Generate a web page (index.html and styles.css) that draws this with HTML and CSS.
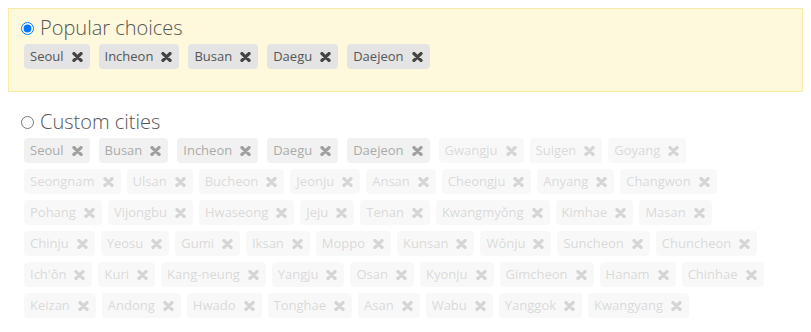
FILE: index.html
```html
<!DOCTYPE html>
<html>
<head>
<meta charset="utf-8">
<link rel="stylesheet" href="styles.css">
</head>
<body>
<svg width="0" height="0" class="defs">
  <symbol id="x" viewBox="0 0 11 10">
    <path d="M2 1.6 L9 8.4 M9 1.6 L2 8.4" stroke="currentColor" stroke-width="3.4" stroke-linecap="round" fill="none"/>
  </symbol>
</svg>

<section class="box box-active">
  <label class="title"><input type="radio" name="mode" checked class="radio"><span>Popular choices</span></label>
  <div class="tags">
    <span class="tag sel">Seoul<svg class="x"><use href="#x"/></svg></span>
    <span class="tag sel">Incheon<svg class="x"><use href="#x"/></svg></span>
    <span class="tag sel">Busan<svg class="x"><use href="#x"/></svg></span>
    <span class="tag sel">Daegu<svg class="x"><use href="#x"/></svg></span>
    <span class="tag sel">Daejeon<svg class="x"><use href="#x"/></svg></span>
  </div>
</section>

<section class="box box-last">
  <label class="title"><input type="radio" name="mode" class="radio"><span>Custom cities</span></label>
  <div class="tags custom" id="custom"></div>
</section>

<script src="app.js"></script>
</body>
</html>
```

FILE: styles.css
```css
body {
  margin: 8px;
  font-family: "Open Sans", "DejaVu Sans", sans-serif;
  color: #555;
  background: #fff;
}
.defs { position: absolute; }
.box {
  border: 1px solid transparent;
  padding: 4px 15px 22px;
  margin-bottom: 10px;
}
.box-active {
  background: #fef8dd;
  border-color: #fbeaa6;
}
.box-last {
  padding-bottom: 0;
  margin-bottom: 0;
}
.title {
  display: flex;
  align-items: center;
  margin-left: -3px;
  margin-bottom: 1px;
  font-family: "Open Sans", sans-serif;
  font-size: 20px;
  font-weight: 300;
  line-height: 30px;
  color: #555;
}
.radio {
  width: 13px;
  height: 13px;
  margin: 1px 6px 0 0;
}
.tags {
  display: flex;
  flex-wrap: wrap;
  row-gap: 6px;
}
.tag {
  display: inline-flex;
  align-items: center;
  height: 25px;
  box-sizing: border-box;
  padding: 0 7px 0 6px;
  margin-right: 6px;
  border-radius: 4px;
  background: #e4e4e4;
  font-size: 13px;
  line-height: 19px;
  color: #555;
}
.tag.sel { margin-right: 9px; }
.x {
  width: 11px;
  height: 10px;
  margin-left: 8px;
  margin-top: 1px;
  color: #444;
}
.custom .tag { opacity: 0.5; }
.custom .tag.off { opacity: 0.22; }
```

FILE: app.js
```js
var sel = ["Seoul","Busan","Incheon","Daegu","Daejeon"];
var rest = ["Gwangju","Suigen","Goyang","Seongnam","Ulsan","Bucheon","Jeonju","Ansan","Cheongju","Anyang","Changwon","Pohang","Vijongbu","Hwaseong","Jeju","Tenan","Kwangmyŏng","Kimhae","Masan","Chinju","Yeosu","Gumi","Iksan","Moppo","Kunsan","Wŏnju","Suncheon","Chuncheon","Ich'ŏn","Kuri","Kang-neung","Yangju","Osan","Kyonju","Gimcheon","Hanam","Chinhae","Keizan","Andong","Hwado","Tonghae","Asan","Wabu","Yanggok","Kwangyang"];
var box = document.getElementById("custom");
function add(name, cls) {
  var s = document.createElement("span");
  s.className = "tag " + cls;
  s.appendChild(document.createTextNode(name));
  s.insertAdjacentHTML("beforeend", '<svg class="x"><use href="#x"/></svg>');
  box.appendChild(s);
}
sel.forEach(function (n) { add(n, "sel"); });
rest.forEach(function (n) { add(n, "off"); });
```
